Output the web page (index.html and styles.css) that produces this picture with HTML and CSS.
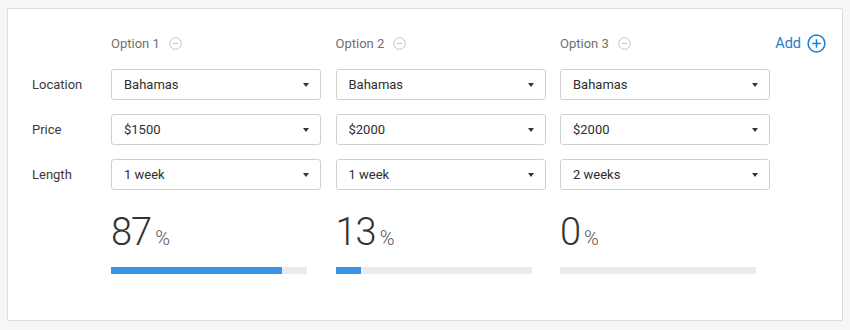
FILE: index.html
```html
<!DOCTYPE html>
<html lang="en">
<head>
    <meta charset="UTF-8">
    <title>Option comparison</title>
    <link rel="stylesheet" href="styles.css">
</head>
<body>
    <div class="card">
        <div class="grid">
            <div></div>
            <div class="opt-head">Option 1
                <svg class="remove" width="13" height="13" viewBox="0 0 13 13"><circle cx="6.5" cy="6.5" r="5.8" fill="none" stroke="#c4c4c4" stroke-width="1"/><line x1="3.8" y1="6.5" x2="9.2" y2="6.5" stroke="#c4c4c4" stroke-width="1"/></svg>
            </div>
            <div class="opt-head">Option 2
                <svg class="remove" width="13" height="13" viewBox="0 0 13 13"><circle cx="6.5" cy="6.5" r="5.8" fill="none" stroke="#c4c4c4" stroke-width="1"/><line x1="3.8" y1="6.5" x2="9.2" y2="6.5" stroke="#c4c4c4" stroke-width="1"/></svg>
            </div>
            <div class="opt-head">Option 3
                <svg class="remove" width="13" height="13" viewBox="0 0 13 13"><circle cx="6.5" cy="6.5" r="5.8" fill="none" stroke="#c4c4c4" stroke-width="1"/><line x1="3.8" y1="6.5" x2="9.2" y2="6.5" stroke="#c4c4c4" stroke-width="1"/></svg>
            </div>
            <div class="add">Add
                <svg width="19" height="19" viewBox="0 0 19 19"><circle cx="9.5" cy="9.5" r="8.4" fill="none" stroke="#1a7ed4" stroke-width="1.5"/><line x1="5.3" y1="9.5" x2="13.7" y2="9.5" stroke="#1a7ed4" stroke-width="1.5"/><line x1="9.5" y1="5.3" x2="9.5" y2="13.7" stroke="#1a7ed4" stroke-width="1.5"/></svg>
            </div>

            <div class="row-label">Location</div>
            <div class="select">Bahamas<span class="caret"></span></div>
            <div class="select">Bahamas<span class="caret"></span></div>
            <div class="select">Bahamas<span class="caret"></span></div>
            <div></div>

            <div class="row-label">Price</div>
            <div class="select">$1500<span class="caret"></span></div>
            <div class="select">$2000<span class="caret"></span></div>
            <div class="select">$2000<span class="caret"></span></div>
            <div></div>

            <div class="row-label">Length</div>
            <div class="select">1 week<span class="caret"></span></div>
            <div class="select">1 week<span class="caret"></span></div>
            <div class="select">2 weeks<span class="caret"></span></div>
            <div></div>

            <div></div>
            <div class="result">
                <div class="pct">87<span class="pct-sign">%</span></div>
                <div class="bar"><div class="bar-fill" style="width: 87%"></div></div>
            </div>
            <div class="result">
                <div class="pct">13<span class="pct-sign">%</span></div>
                <div class="bar"><div class="bar-fill" style="width: 13%"></div></div>
            </div>
            <div class="result">
                <div class="pct">0<span class="pct-sign">%</span></div>
                <div class="bar"><div class="bar-fill" style="width: 0%"></div></div>
            </div>
            <div></div>
        </div>
    </div>
</body>
</html>
```

FILE: styles.css
```css
body {
    margin: 0;
    padding: 8px 7px;
    background: #f6f6f6;
    font-family: Roboto, "Liberation Sans", sans-serif;
    color: #333;
}

.card {
    box-sizing: border-box;
    height: 313px;
    background: white;
    border: 1px solid #dcdcdc;
    border-radius: 2px;
    padding: 22px 16px 0 24px;
}

.grid {
    display: grid;
    grid-template-columns: 64.5px 210px 210px 210px 1fr;
    grid-template-rows: 24px 31px 31px 31px auto;
    column-gap: 14.5px;
    row-gap: 14px;
    align-items: center;
}

.opt-head {
    display: flex;
    align-items: center;
    gap: 9px;
    font-size: 13px;
    color: #707070;
}

.remove {
    display: block;
}

.add {
    justify-self: end;
    margin-left: -14px;
    display: flex;
    align-items: center;
    gap: 6px;
    font-size: 14.5px;
    color: #1a7ed4;
}

.add svg {
    display: block;
}

.row-label {
    font-size: 13px;
    color: #3a3a3a;
}

.select {
    box-sizing: border-box;
    height: 31px;
    border: 1px solid #cfcfcf;
    border-radius: 3px;
    padding: 0 11px 0 12px;
    display: flex;
    align-items: center;
    justify-content: space-between;
    font-size: 13px;
    color: #2e2e2e;
}

.caret {
    width: 0;
    height: 0;
    border-left: 3.5px solid transparent;
    border-right: 3.5px solid transparent;
    border-top: 4px solid #333;
}

.result {
    margin-top: 9px;
    align-self: start;
}

.pct {
    font-size: 38px;
    font-weight: 300;
    line-height: 38px;
    color: #333;
    letter-spacing: -1px;
}

.pct-sign {
    font-size: 20px;
    margin-left: 4px;
    letter-spacing: 0;
    color: #555;
}

.bar {
    margin-top: 10px;
    width: 196px;
    height: 7px;
    background: #ebebeb;
}

.bar-fill {
    height: 100%;
    background: #3a94e6;
}
```
